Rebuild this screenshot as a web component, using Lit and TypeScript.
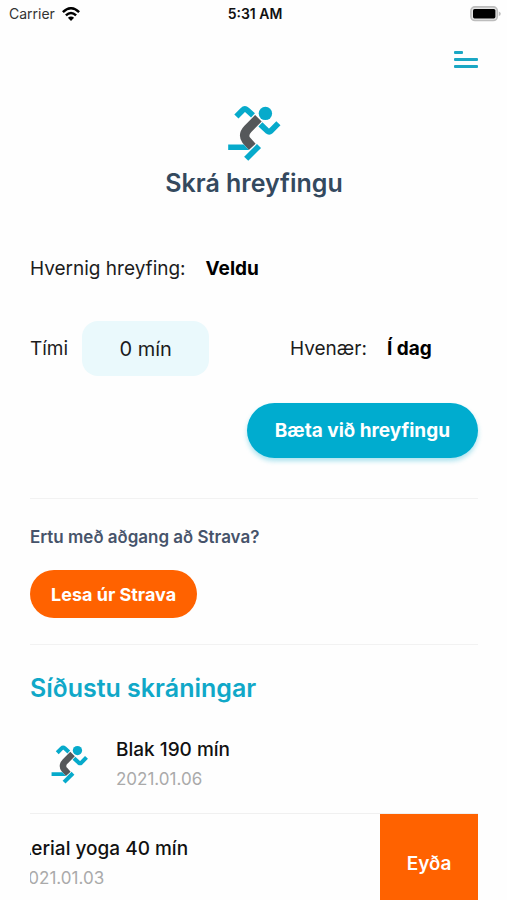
import { LitElement, html, css, svg } from "lit";
import { customElement, property } from "lit/decorators.js";

@customElement("runner-icon")
class RunnerIcon extends LitElement {
  static styles = css`
    :host {
      display: block;
    }
    .figure {
      display: block;
      width: 100%;
      height: auto;
    }
    .limb {
      fill: none;
      stroke: #06aacb;
      stroke-width: 5.8;
      stroke-linejoin: round;
    }
    .head {
      fill: #06aacb;
    }
    .torso {
      fill: none;
      stroke: #55585a;
      stroke-width: 9.2;
    }
    .shin {
      fill: #06aacb;
    }
  `;

  render() {
    return html`<svg class="figure" viewBox="6 6 56 58" aria-hidden="true">
      ${svg`
        <path class="limb" d="M16.4 18.6 L22.6 12.2 Q24.8 10 27.2 12.1 L33 17.4" />
        <circle class="head" cx="45.4" cy="15.4" r="6.7" />
        <path class="limb" d="M40.4 26.4 L47.4 33 Q49.2 34.4 51 32.8 L58.4 25.2" />
        <path class="torso" d="M38.4 20.2 L27.8 31 Q22.4 36.8 26.2 42.2 L32.2 48.8" />
        <path class="shin" d="M8.2 46.6 H23.8 L28.8 52 H8.2 Z" />
        <path class="limb" d="M39 48 L26.2 60.8" />
      `}
    </svg>`;
  }
}

@customElement("status-bar")
class StatusBar extends LitElement {
  static styles = css`
    :host {
      display: grid;
      grid-template-columns: 1fr auto 1fr;
      align-items: center;
      height: 28px;
      padding: 0 6px 0 9px;
      font-size: 14px;
      line-height: 20px;
      color: #111;
    }
    .carrier {
      display: flex;
      align-items: center;
      gap: 7px;
      color: #333;
    }
    .time {
      font-weight: 600;
    }
    .battery {
      justify-self: end;
    }
  `;

  render() {
    return html`
      <div class="carrier">
        <span>Carrier</span>
        <svg width="18" height="14" viewBox="0 0 18 14" aria-hidden="true">
          <g fill="none" stroke="#000" stroke-width="2.5">
            <path d="M0.9 5.2 Q9 -2.6 17.1 5.2" />
            <path d="M3.9 8.4 Q9 3.6 14.1 8.4" />
          </g>
          <path d="M9 14 L5.9 10.8 Q9 8.2 12.1 10.8 Z" />
        </svg>
      </div>
      <span class="time">5:31 AM</span>
      <svg class="battery" width="31" height="16" viewBox="0 0 31 16" aria-hidden="true">
        <rect x="0.9" y="0.9" width="26.4" height="13.6" rx="4" fill="#e4e4e4" stroke="#bdbdbd" stroke-width="1.6" />
        <rect x="3" y="3" width="22.4" height="9.4" rx="1.6" fill="#000" />
        <path d="M28.8 5.4 Q30.8 6 30.8 7.7 Q30.8 9.4 28.8 10 Z" fill="#bdbdbd" />
      </svg>
    `;
  }
}

@customElement("log-entry")
class LogEntry extends LitElement {
  @property() name = "";
  @property() date = "";
  @property({ type: Boolean }) swiped = false;

  static styles = css`
    :host {
      display: flex;
      justify-content: flex-end;
      height: 98px;
      overflow: hidden;
    }
    .content {
      flex: 0 0 100%;
      box-sizing: border-box;
      display: flex;
      align-items: center;
      gap: 27px;
      padding-left: 20px;
    }
    .icon {
      width: 39px;
    }
    .text {
      display: flex;
      flex-direction: column;
      gap: 4px;
    }
    .name {
      font-size: 19px;
      font-weight: 500;
      line-height: 26px;
      color: #111;
    }
    .date {
      font-size: 17px;
      line-height: 24px;
      color: #aaa;
    }
    .delete {
      flex: 0 0 98px;
      border: 0;
      padding: 0;
      background: #ff6200;
      color: #fff;
      font: inherit;
      font-size: 19px;
      font-weight: 600;
    }
  `;

  render() {
    return html`
      <div class="content">
        <runner-icon class="icon"></runner-icon>
        <div class="text">
          <span class="name">${this.name}</span>
          <span class="date">${this.date}</span>
        </div>
      </div>
      ${this.swiped ? html`<button class="delete" type="button">Eyða</button>` : null}
    `;
  }
}

@customElement("app-root")
class AppRoot extends LitElement {
  private entries = [
    { name: "Blak 190 mín", date: "2021.01.06", swiped: false },
    { name: "Aerial yoga 40 mín", date: "2021.01.03", swiped: true },
  ];

  static styles = css`
    :host {
      display: flex;
      flex-direction: column;
      height: 100vh;
      overflow: hidden;
      background: #fefefe;
      font-family: Inter, "Noto Sans", sans-serif;
      color: #1c1c1c;
    }
    button,
    input {
      font: inherit;
      color: inherit;
      border: 0;
      margin: 0;
      padding: 0;
      background: none;
    }
    .page {
      flex: 1;
      min-height: 0;
      overflow-y: auto;
      scrollbar-width: none;
      padding: 0 29px 0 30px;
    }
    .top {
      display: flex;
      justify-content: flex-end;
      padding-top: 20px;
    }
    .menu {
      display: flex;
      flex-direction: column;
      gap: 4px;
      padding: 3px 0;
    }
    .bar {
      width: 24px;
      height: 3px;
      border-radius: 1px;
      background: #1aa7c4;
    }
    .bar.short {
      width: 9px;
    }
    .hero {
      display: flex;
      flex-direction: column;
      align-items: center;
      gap: 5px;
      padding-top: 33px;
    }
    .logo {
      width: 56px;
    }
    .title {
      margin: 0;
      font-size: 25px;
      line-height: 32px;
      font-weight: 600;
      color: #34495e;
    }
    .form {
      padding-top: 54px;
      font-size: 19px;
      line-height: 32px;
    }
    .row {
      display: flex;
      align-items: center;
    }
    .choice {
      font-weight: 700;
      color: #000;
      margin-left: 20px;
    }
    .details {
      display: grid;
      grid-template-columns: 260px 1fr;
      padding-top: 36px;
    }
    .minutes {
      box-sizing: border-box;
      width: 127px;
      height: 55px;
      margin-left: 14px;
      border-radius: 16px;
      background: #eaf9fc;
      text-align: center;
      font-size: 20px;
    }
    .submit-row {
      display: flex;
      justify-content: flex-end;
      padding: 27px 0 40px;
    }
    .submit {
      height: 55px;
      padding: 0 28px;
      border-radius: 28px;
      background: #00accf;
      color: #fff;
      font-weight: 700;
      box-shadow: 0 3px 5px #00accf55;
    }
    .strava {
      display: flex;
      flex-direction: column;
      align-items: flex-start;
      gap: 21px;
      padding: 26px 0;
      border-top: 1px solid #f2f2f2;
      border-bottom: 1px solid #f2f2f2;
    }
    .question {
      margin: 0;
      font-size: 17px;
      line-height: 24px;
      font-weight: 600;
      color: #46536a;
    }
    .connect {
      height: 48px;
      padding: 0 21px;
      border-radius: 24px;
      background: #ff6200;
      color: #fff;
      font-size: 18px;
      font-weight: 700;
    }
    .heading {
      margin: 0;
      padding: 27px 0 11px;
      font-size: 25px;
      line-height: 32px;
      font-weight: 600;
      color: #10a8c8;
    }
    .list {
      list-style: none;
      margin: 0;
      padding: 0;
    }
    .item + .item {
      border-top: 1px solid #f0f0f0;
    }
  `;

  render() {
    return html`
      <status-bar></status-bar>
      <main class="page">
        <div class="top">
          <button class="menu" type="button" aria-label="Valmynd">
            <span class="bar short"></span>
            <span class="bar"></span>
            <span class="bar"></span>
          </button>
        </div>
        <header class="hero">
          <runner-icon class="logo"></runner-icon>
          <h1 class="title">Skrá hreyfingu</h1>
        </header>
        <form class="form">
          <div class="row">
            <label for="activity">Hvernig hreyfing:</label>
            <button class="choice" id="activity" type="button">Veldu</button>
          </div>
          <div class="details">
            <div class="row">
              <label for="minutes">Tími</label>
              <input class="minutes" id="minutes" type="text" value="0 mín" />
            </div>
            <div class="row">
              <label for="day">Hvenær:</label>
              <button class="choice" id="day" type="button">Í dag</button>
            </div>
          </div>
          <div class="submit-row">
            <button class="submit" type="button">Bæta við hreyfingu</button>
          </div>
        </form>
        <section class="strava">
          <p class="question">Ertu með aðgang að Strava?</p>
          <button class="connect" type="button">Lesa úr Strava</button>
        </section>
        <section>
          <h2 class="heading">Síðustu skráningar</h2>
          <ul class="list">
            ${this.entries.map(
              (e) => html`<li class="item">
                <log-entry .name=${e.name} .date=${e.date} .swiped=${e.swiped}></log-entry>
              </li>`
            )}
          </ul>
        </section>
      </main>
    `;
  }
}
